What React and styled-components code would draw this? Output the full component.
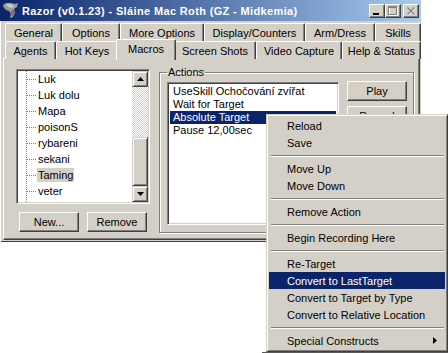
import React from 'react';
import styled, { createGlobalStyle, css } from 'styled-components';

const GlobalStyle = createGlobalStyle`
  html, body {
    margin: 0;
    padding: 0;
    background: #ffffff;
  }
  body {
    font-family: "Liberation Sans", Arial, sans-serif;
    font-size: 11px;
    color: #000;
  }
`;

const raised = css`
  border: 1px solid;
  border-color: #ffffff #404040 #404040 #ffffff;
  box-shadow: inset -1px -1px #808080;
`;

const sunken = css`
  border: 1px solid;
  border-color: #808080 #ffffff #ffffff #808080;
  box-shadow: inset 1px 1px #404040, inset -1px -1px #d4d0c8;
`;

const Page = styled.div`
  position: relative;
  width: 448px;
  height: 353px;
  overflow: hidden;
`;

const Window = styled.div`
  width: 421px;
  height: 242px;
  box-sizing: border-box;
  background: #d4d0c8;
  display: flex;
  flex-direction: column;
  box-shadow: inset 1px 0 #ffffff, inset 0 -1px #404040;
`;

const TitleBar = styled.div`
  height: 21px;
  display: flex;
  align-items: center;
  padding: 0 2px 0 2px;
  background: linear-gradient(to right, #0a246a, #a6caf0);
  color: #fff;
  font-weight: bold;
  font-size: 11px;
`;

const TitleText = styled.span`
  margin-left: 3px;
  flex: 1;
  white-space: nowrap;
  letter-spacing: 0.36px;
`;

const CaptionButtons = styled.div`
  display: flex;
  align-items: center;
`;

const CaptionButton = styled.div`
  width: 16px;
  height: 14px;
  box-sizing: border-box;
  background: #d4d0c8;
  ${raised};
  display: flex;
  align-items: center;
  justify-content: center;
  margin-left: ${(p) => (p.$gap ? '2px' : '0')};
`;

const Body = styled.div`
  flex: 1;
  display: flex;
  flex-direction: column;
  padding: 2px 0 2px 3px;
`;

const TabStrip = styled.div`
  display: flex;
  flex-direction: column;
  padding-left: 2px;
  position: relative;
  z-index: 1;
`;

const TabRow = styled.div`
  display: flex;
  height: 18px;
`;

const Tab = styled.div`
  position: relative;
  box-sizing: border-box;
  width: ${(p) => p.$w}px;
  height: 18px;
  display: flex;
  align-items: center;
  justify-content: center;
  white-space: nowrap;
  background: #d4d0c8;
  border-left: 1px solid #ffffff;
  border-top: 1px solid #ffffff;
  border-right: 1px solid #404040;
  box-shadow: inset -1px 0 #808080;
  border-radius: 2px 2px 0 0;
  ${(p) =>
    p.$active &&
    css`
      margin: -2px -2px 0 -2px;
      width: ${p.$w + 4}px;
      height: 21px;
      padding-bottom: 3px;
      z-index: 2;
    `}
`;

const Panel = styled.div`
  flex: 1;
  margin-top: -1px;
  margin-right: 1px;
  box-sizing: border-box;
  border: 1px solid;
  border-color: #ffffff #404040 #404040 #ffffff;
  box-shadow: inset -1px -1px #808080;
  display: flex;
  gap: 9px;
  padding: 10px 0 0 12px;
`;

const LeftColumn = styled.div`
  width: 134px;
  display: flex;
  flex-direction: column;
  gap: 8px;
`;

const TreeBox = styled.div`
  height: 135px;
  box-sizing: border-box;
  background: #fff;
  ${sunken};
  padding: 1px;
  display: flex;
`;

const TreeItems = styled.div`
  flex: 1;
  overflow: hidden;
  padding-left: 8px;
`;

const TreeTrunk = styled.div`
  border-left: 1px dotted #808080;
  height: 100%;
`;

const TreeItem = styled.div`
  height: 16px;
  display: flex;
  align-items: center;
  white-space: nowrap;
`;

const Connector = styled.span`
  width: 9px;
  height: 0;
  border-top: 1px dotted #808080;
  margin-right: 1px;
`;

const TreeLabel = styled.span`
  padding: 1px 1px;
  line-height: 12px;
  background: ${(p) => (p.$selected ? '#d4d0c8' : 'transparent')};
`;

const ScrollBar = styled.div`
  width: 16px;
  display: flex;
  flex-direction: column;
`;

const ScrollButton = styled.div`
  width: 16px;
  height: ${(p) => p.$h || 16}px;
  box-sizing: border-box;
  background: #d4d0c8;
  border: 1px solid;
  border-color: #d4d0c8 #404040 #404040 #d4d0c8;
  box-shadow: inset 1px 1px #ffffff, inset -1px -1px #808080;
  display: flex;
  align-items: center;
  justify-content: center;
`;

const ScrollTrack = styled.div`
  height: ${(p) => p.$h}px;
  background: repeating-conic-gradient(#ffffff 0 25%, #d4d0c8 0 50%) 0 0 / 2px 2px;
`;

const ButtonRow = styled.div`
  display: flex;
  gap: 8px;
  padding-left: 3px;
`;

const Button = styled.div`
  width: 60px;
  height: 20px;
  box-sizing: border-box;
  background: #d4d0c8;
  ${raised};
  display: flex;
  align-items: center;
  justify-content: center;
`;

const GroupBox = styled.fieldset`
  margin: -3px 0 0 0;
  width: 255px;
  height: 167px;
  box-sizing: border-box;
  border: 1px solid #808080;
  box-shadow: inset 1px 1px #ffffff, 1px 1px #ffffff;
  padding: 3px 6px 0 7px;
  display: flex;
  gap: 8px;
  align-items: flex-start;
  min-width: 0;
`;

const Legend = styled.legend`
  padding: 0 1px;
  margin-left: 0;
  line-height: 13px;
`;

const ActionList = styled.div`
  width: 172px;
  height: 143px;
  box-sizing: border-box;
  background: #fff;
  ${sunken};
  padding: 2px;
`;

const ActionItem = styled.div`
  height: 13px;
  line-height: 13px;
  padding-left: 3px;
  white-space: nowrap;
  overflow: hidden;
  background: ${(p) => (p.$selected ? '#0a246a' : 'transparent')};
  color: ${(p) => (p.$selected ? '#fff' : '#000')};
`;

const SideButtons = styled.div`
  display: flex;
  flex-direction: column;
  gap: 5px;
  margin-top: -1px;
`;

const Menu = styled.div`
  position: absolute;
  left: 266px;
  top: 114px;
  width: 182px;
  height: 238px;
  box-sizing: border-box;
  background: #d4d0c8;
  border: 1px solid;
  border-color: #d4d0c8 #404040 #404040 #d4d0c8;
  box-shadow: inset 1px 1px #ffffff, inset -1px -1px #808080;
  padding: 2px;
  z-index: 5;
`;

const MenuItem = styled.div`
  height: 17px;
  display: flex;
  align-items: center;
  padding-left: 18px;
  padding-right: 8px;
  white-space: nowrap;
  background: ${(p) => (p.$active ? '#0a246a' : 'transparent')};
  color: ${(p) => (p.$active ? '#fff' : '#000')};
`;

const MenuLabel = styled.span`
  flex: 1;
`;

const MenuSeparator = styled.div`
  height: 9px;
  display: flex;
  align-items: center;
  padding: 0 1px 0 2px;
  &::after {
    content: '';
    flex: 1;
    height: 0;
    border-top: 1px solid #808080;
    border-bottom: 1px solid #ffffff;
  }
`;

const BackdropStrip = styled.div`
  position: absolute;
  left: 262px;
  top: 352px;
  width: 186px;
  height: 1px;
  background: #5a5a5a;
`;

const row1 = [
  ['General', 57],
  ['Options', 58],
  ['More Options', 84],
  ['Display/Counters', 101],
  ['Arm/Dress', 70],
  ['Skills', 46],
];

const row2 = [
  ['Agents', 51],
  ['Hot Keys', 62],
  ['Macros', 56, true],
  ['Screen Shots', 82],
  ['Video Capture', 86],
  ['Help & Status', 79],
];

const macros = ['Luk', 'Luk dolu', 'Mapa', 'poisonS', 'rybareni', 'sekani', 'Taming', 'veter'];

const actions = ['UseSkill Ochočování zvířat', 'Wait for Target', 'Absolute Target', 'Pause 12,00sec'];

const menu = [
  'Reload',
  'Save',
  '-',
  'Move Up',
  'Move Down',
  '-',
  'Remove Action',
  '-',
  'Begin Recording Here',
  '-',
  'Re-Target',
  'Convert to LastTarget',
  'Convert to Target by Type',
  'Convert to Relative Location',
  '-',
  'Special Constructs',
];

function RazorIcon() {
  return (
    <svg width="17" height="17" viewBox="0 0 17 17">
      <path
        d="M1 3 L4 1 L9 1 L13 2 L16 1 L15 5 L12 7 L13 11 L11 15 L8 16 L9 12 L7 9 L4 8 L2 6 Z"
        fill="#9a9a9a"
      />
      <path d="M4 2 L9 2 L12 4 L10 6 L6 5 Z" fill="#c8c8c8" />
      <path d="M9 9 L12 8 L12 12 L10 14 Z" fill="#6c6c6c" />
    </svg>
  );
}

function Arrow({ dir }) {
  const d = dir === 'up' ? 'M0 4 L3.5 0 L7 4 Z' : 'M0 0 L7 0 L3.5 4 Z';
  return (
    <svg width="7" height="4" viewBox="0 0 7 4">
      <path d={d} fill="#000" />
    </svg>
  );
}

export default function App() {
  return (
    <Page>
      <GlobalStyle />
      <Window>
        <TitleBar>
          <RazorIcon />
          <TitleText>Razor (v0.1.23) - Sláine Mac Roth (GZ - Midkemia)</TitleText>
          <CaptionButtons>
            <CaptionButton>
              <svg width="8" height="8" viewBox="0 0 8 8">
                <rect x="0" y="6" width="6" height="2" fill="#000" />
              </svg>
            </CaptionButton>
            <CaptionButton>
              <svg width="10" height="10" viewBox="0 0 10 10">
                <rect x="1.5" y="1.5" width="8" height="8" fill="none" stroke="#fff" />
                <rect x="0.5" y="0.5" width="8" height="8" fill="none" stroke="#808080" />
                <rect x="0" y="0" width="9" height="2" fill="#808080" />
              </svg>
            </CaptionButton>
            <CaptionButton $gap>
              <svg width="9" height="8" viewBox="0 0 9 8">
                <path d="M1 1 L8 8 M8 1 L1 8" stroke="#fff" strokeWidth="1.4" />
                <path d="M0.5 0.5 L7.5 7.5 M7.5 0.5 L0.5 7.5" stroke="#808080" strokeWidth="1.4" />
              </svg>
            </CaptionButton>
          </CaptionButtons>
        </TitleBar>
        <Body>
          <TabStrip>
            <TabRow>
              {row1.map(([label, w]) => (
                <Tab key={label} $w={w}>
                  {label}
                </Tab>
              ))}
            </TabRow>
            <TabRow>
              {row2.map(([label, w, active]) => (
                <Tab key={label} $w={w} $active={active}>
                  {label}
                </Tab>
              ))}
            </TabRow>
          </TabStrip>
          <Panel>
            <LeftColumn>
              <TreeBox>
                <TreeItems>
                  <TreeTrunk>
                    {macros.map((m) => (
                      <TreeItem key={m}>
                        <Connector />
                        <TreeLabel $selected={m === 'Taming'}>{m}</TreeLabel>
                      </TreeItem>
                    ))}
                  </TreeTrunk>
                </TreeItems>
                <ScrollBar>
                  <ScrollButton>
                    <Arrow dir="up" />
                  </ScrollButton>
                  <ScrollTrack $h={50} />
                  <ScrollButton $h={49} />
                  <ScrollButton>
                    <Arrow dir="down" />
                  </ScrollButton>
                </ScrollBar>
              </TreeBox>
              <ButtonRow>
                <Button>New...</Button>
                <Button>Remove</Button>
              </ButtonRow>
            </LeftColumn>
            <GroupBox>
              <Legend>Actions</Legend>
              <ActionList>
                {actions.map((a) => (
                  <ActionItem key={a} $selected={a === 'Absolute Target'}>
                    {a}
                  </ActionItem>
                ))}
              </ActionList>
              <SideButtons>
                <Button>Play</Button>
                <Button>Record</Button>
              </SideButtons>
            </GroupBox>
          </Panel>
        </Body>
      </Window>
      <Menu>
        {menu.map((item, i) =>
          item === '-' ? (
            <MenuSeparator key={i} />
          ) : (
            <MenuItem key={i} $active={item === 'Convert to LastTarget'}>
              <MenuLabel>{item}</MenuLabel>
              {item === 'Special Constructs' && (
                <svg width="4" height="7" viewBox="0 0 4 7">
                  <path d="M0 0 L4 3.5 L0 7 Z" fill="#000" />
                </svg>
              )}
            </MenuItem>
          )
        )}
      </Menu>
      <BackdropStrip />
    </Page>
  );
}
